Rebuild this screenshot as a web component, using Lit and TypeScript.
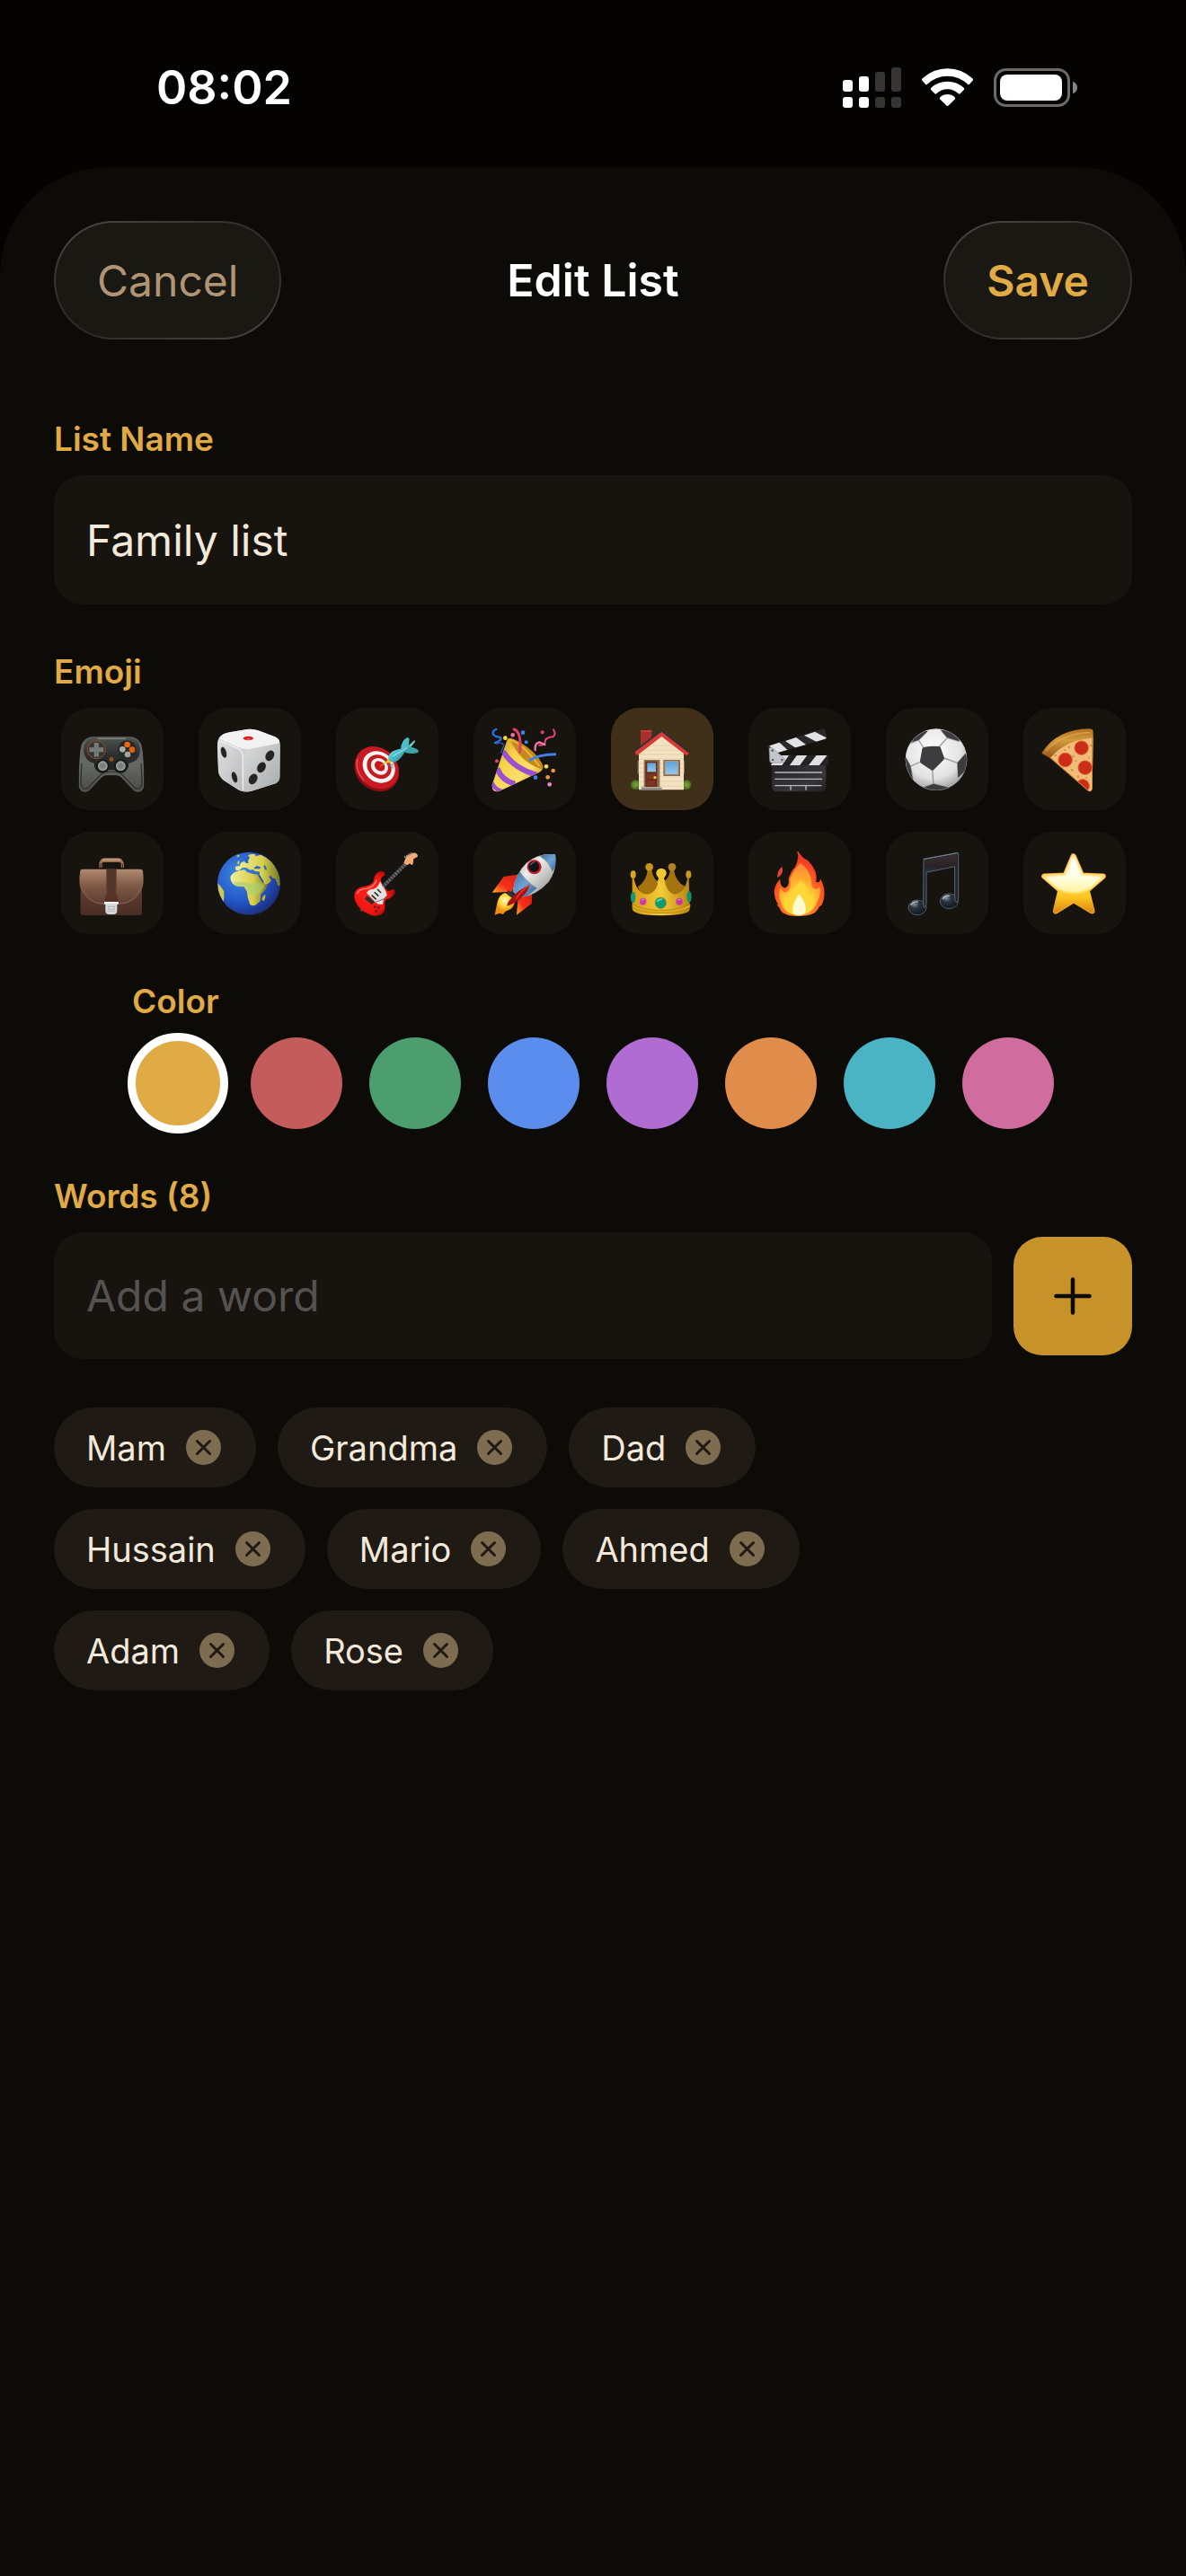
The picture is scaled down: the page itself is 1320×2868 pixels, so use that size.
import { LitElement, html, svg, css } from "lit";
import type { TemplateResult } from "lit";
import { customElement, state } from "lit/decorators.js";

interface EmojiOption {
  name: string;
  box: string;
  art: TemplateResult;
}

const EMOJIS: EmojiOption[] = [
  {
    name: "Game controller",
    box: "54 54 342 342",
    art: svg`
      <defs>
        <linearGradient id="pad-body" x1="0" y1="0" x2="0" y2="1">
          <stop offset="0" stop-color="#5b5f5b"/><stop offset=".5" stop-color="#666863"/><stop offset="1" stop-color="#4a4b47"/>
        </linearGradient>
        <linearGradient id="pad-plate" x1="0" y1="0" x2="0" y2="1">
          <stop offset="0" stop-color="#4d5350"/><stop offset=".5" stop-color="#2b2e2c"/><stop offset="1" stop-color="#1f2120"/>
        </linearGradient>
        <radialGradient id="pad-stick"><stop offset="0" stop-color="#6f7573"/><stop offset=".7" stop-color="#858b89"/><stop offset="1" stop-color="#b4b8b6"/></radialGradient>
      </defs>
      <path d="M160 152h125q26 1 36 26q9 40 8 136q-2 20-19 20q-12-1-20-12l-34-36q-8-8-18-8h-32q-10 0-18 8l-34 36q-8 12-20 12q-18-1-19-20q-1-96 8-136q10-25 37-26z" fill="url(#pad-body)" stroke="#73766f" stroke-width="2"/>
      <path d="M123 240q-4 50-2 76M321 240q4 50 2 76" stroke="#2f312e" stroke-width="4" fill="none"/>
      <path d="M124 314q4 18 20 7l44-45q8-8 20-8h28q12 0 20 8l44 45q16 11 20-7" fill="none" stroke="#32342f" stroke-width="4"/>
      <path d="M166 154h112q38 2 40 42q-2 38-38 43q0 30-27 32q-13 0-21-9h-20q-8 9-21 9q-27-2-27-32q-32-6-35-43q2-40 37-42z" fill="url(#pad-plate)"/>
      <path d="M176 157h94" stroke="#7d8581" stroke-width="5"/>
      <circle cx="172" cy="194" r="30" fill="#343634" stroke="#9a4c20" stroke-width="3"/>
      <path d="M165 171h14v16h16v14h-16v16h-14v-16h-16v-14h16z" fill="#747a76" stroke="#8d938f" stroke-width="1"/>
      <circle cx="275" cy="194" r="31" fill="#272928"/>
      <circle cx="275" cy="177" r="10" fill="#ee6410"/><circle cx="291" cy="194" r="10" fill="#e25e0f"/>
      <circle cx="259" cy="193" r="10" fill="#a9abab"/><circle cx="276" cy="210" r="10" fill="#a3a5a5"/>
      <circle cx="222" cy="226" r="6" fill="#8c4316" stroke="#c66a2a" stroke-width="2"/>
      <circle cx="193" cy="249" r="23" fill="#191b1a"/><circle cx="253" cy="249" r="23" fill="#191b1a"/>
      <circle cx="193" cy="248" r="16" fill="url(#pad-stick)"/><circle cx="253" cy="248" r="16" fill="url(#pad-stick)"/>`,
  },
  {
    name: "Die",
    box: "513 54 342 342",
    art: svg`
      <defs>
        <linearGradient id="die-left" x1="0" y1="0" x2="1" y2="1"><stop offset="0" stop-color="#e0e0e1"/><stop offset="1" stop-color="#b9babc"/></linearGradient>
        <linearGradient id="die-right" x1="0" y1="0" x2="1" y2="1"><stop offset="0" stop-color="#dcdddd"/><stop offset="1" stop-color="#a9aaac"/></linearGradient>
      </defs>
      <path d="M584 151q8-10 26-14l65-11q20-2 37 4l56 21q17 8 17 29l-1 105q0 15-14 22l-80 25q-26 5-42-3l-50-32q-18-14-19-33l-3-84q0-20 8-29z" fill="#cfd0d1"/>
      <path d="M580 160q-5 12-4 30l3 74q1 19 19 33l50 32q8 4 14 3l-2-112q0-20-14-28z" fill="url(#die-left)"/>
      <path d="M783 166q2 8 2 18l-1 101q0 15-14 22l-80 25q-16 4-28 2l-1-114q1-20 14-26z" fill="url(#die-right)"/>
      <path d="M582 155q8-13 28-18l65-11q20-2 37 4l56 21q16 7 15 17q-1 4-8 6l-90 17q-20 3-36-4l-58-25q-8-3-9-7z" fill="#f2f2f3"/>
      <path d="M584 164l62 27q14 8 14 28l1 110" fill="none" stroke="#f1f1f2" stroke-width="4"/>
      <path d="M664 190q60-8 114-22" stroke="#f0f0f0" stroke-width="3" fill="none"/>
      <ellipse cx="679" cy="156" rx="17" ry="6.500" fill="#dc1420"/><ellipse cx="679" cy="158" rx="8" ry="3" fill="#f45a55"/>
      <g fill="#242425" stroke="#111" stroke-width="1">
        <ellipse cx="597" cy="203" rx="8" ry="18" transform="rotate(-16 597 203)"/>
        <ellipse cx="633" cy="286" rx="8" ry="18" transform="rotate(-16 633 286)"/>
        <ellipse cx="751" cy="214" rx="13" ry="18" transform="rotate(28 751 214)"/>
        <ellipse cx="723" cy="253" rx="13" ry="18" transform="rotate(28 723 253)"/>
        <ellipse cx="695" cy="292" rx="13" ry="18" transform="rotate(28 695 292)"/>
      </g>`,
  },
  {
    name: "Target",
    box: "42 54 342 342",
    art: svg`
      <defs>
        <linearGradient id="dart" x1="0" y1="0" x2="1" y2="1"><stop offset="0" stop-color="#7fe0e4"/><stop offset=".5" stop-color="#46b9c4"/><stop offset="1" stop-color="#2b8793"/></linearGradient>
      </defs>
      <ellipse cx="178" cy="260" rx="80" ry="68" transform="rotate(42 178 260)" fill="#8d0f13"/>
      <ellipse cx="179" cy="254" rx="78" ry="65" transform="rotate(42 179 254)" fill="#c81a20"/>
      <path d="M114 224q-12 36 22 74" stroke="#e87173" stroke-width="3" fill="none"/>
      <ellipse cx="185" cy="252" rx="58" ry="49" transform="rotate(42 185 252)" fill="#f6f4f3"/>
      <ellipse cx="186" cy="251" rx="44" ry="37" transform="rotate(42 186 251)" fill="#c71a20"/>
      <ellipse cx="187" cy="250" rx="31" ry="26" transform="rotate(42 187 250)" fill="#f4f1f0"/>
      <ellipse cx="188" cy="249" rx="19" ry="15" transform="rotate(42 188 249)" fill="#c4191f"/>
      <path d="M214 244l18 16q6-14 4-24z" fill="#7d8b90" opacity=".5"/>
      <path d="M190 249l24-17" stroke="#d8a410" stroke-width="3" stroke-linecap="round"/>
      <path d="M206 238l12-16 10 14q-12 4-22 2z" fill="#f0c010"/>
      <path d="M278 186l26-24q4 4 0 8l-18 22z" fill="#66cdd4"/>
      <path d="M216 222q2-16 18-24q18-8 36-8q6 10-8 26q-10 16-28 20q-12 0-18-14z" fill="url(#dart)"/>
      <path d="M258 192q2-28 20-38q6-2 9 4q0 20-9 38z" fill="#4cbcc5"/>
      <path d="M264 200l22-16q22 4 31 12q2 6-3 8q-22 8-50-4z" fill="#3fa3ad"/>
      <path d="M232 216l48-28" stroke="#9deef0" stroke-width="3"/>`,
  },
  {
    name: "Party popper",
    box: "501 54 342 342",
    art: svg`
      <defs>
        <linearGradient id="cone" x1="0" y1="0" x2="1" y2="1"><stop offset="0" stop-color="#c98d16"/><stop offset=".35" stop-color="#f7d24a"/><stop offset=".65" stop-color="#fbe06a"/><stop offset="1" stop-color="#c38713"/></linearGradient>
        <clipPath id="cone-clip"><path d="M563 312l50-150q4-8 10-4q30 76 107 102q-2 6-10 10l-132 62q-18 6-24-8z"/></clipPath>
      </defs>
      <path d="M614 160q6-12 36 6q64 36 83 82q2 14-8 14q-60 0-111-102z" fill="#c48a1a"/>
      <path d="M622 160q40 10 100 90" fill="none" stroke="#f0b83c" stroke-width="5"/>
      <path d="M563 312l50-150q4-8 10-4q30 76 107 102q-2 6-10 10l-132 62q-18 6-24-8z" fill="url(#cone)"/>
      <g clip-path="url(#cone-clip)" fill="none" stroke="#9c4fcf" stroke-width="18">
        <path d="M600 200q36 58 112 78"/><path d="M580 256q16 42 60 52"/><path d="M562 304q8 22 36 30" stroke-width="14"/>
      </g>
      <path d="M577 126q-14 4-10 17q6 8 16 8q14 2 8 10q-8 8-18 10" fill="none" stroke="#2b6fe8" stroke-width="7" stroke-linecap="round"/>
      <path d="M578 174q22-8 24 8l-10 22" fill="none" stroke="#2458c6" stroke-width="4" stroke-linecap="round"/>
      <path d="M636 126q26 8 20 76" fill="none" stroke="#e23c68" stroke-width="9" stroke-linecap="round"/>
      <path d="M687 230q28-20 90-21" fill="none" stroke="#3f7fe8" stroke-width="9"/>
      <path d="M768 127q10 16-2 24q-26 2-26 16q0 14-20 12" fill="none" stroke="#e8447e" stroke-width="6" stroke-linecap="round"/>
      <path d="M707 195q-2-24 14-26l18 8" fill="none" stroke="#f07ca8" stroke-width="7" stroke-linecap="round"/>
      <g><circle cx="607" cy="155" r="7" fill="#f6e23e"/><circle cx="632" cy="145" r="7" fill="#f06fa6"/><circle cx="666" cy="137" r="7" fill="#3b84ee"/><circle cx="677" cy="169" r="6" fill="#3b84ee"/><circle cx="731" cy="136" r="6" fill="#df4070"/><circle cx="579" cy="232" r="6" fill="#e04468"/><circle cx="708" cy="287" r="7" fill="#3b84ee"/><circle cx="744" cy="250" r="7" fill="#f4e04a"/><circle cx="767" cy="264" r="7" fill="#f0983c"/><circle cx="749" cy="286" r="7" fill="#f09a40"/><circle cx="755" cy="310" r="7" fill="#f287bd"/></g>`,
  },
  {
    name: "House",
    box: "60 54 342 342",
    art: svg`
      <defs>
        <linearGradient id="pane" x1="0" y1="0" x2="0" y2="1"><stop offset="0" stop-color="#5e9fd6"/><stop offset="1" stop-color="#93c9ee"/></linearGradient>
        <radialGradient id="bush"><stop offset="0" stop-color="#7fa63c"/><stop offset="1" stop-color="#466b1d"/></radialGradient>
      </defs>
      <circle cx="142" cy="311" r="16" fill="url(#bush)"/><circle cx="312" cy="311" r="16" fill="url(#bush)"/>
      <path d="M159 129h37v38l-37 30z" fill="#a5302c"/><path d="M159 129h37v5h-37z" fill="#c9413a"/>
      <path d="M149 230h5v45h-5zM302 230h4v45h-4z" fill="#8a7159"/>
      <path d="M153 205l76-60 74 60v123H153z" fill="#f3e2c1"/>
      <g stroke="#dcc9a5" stroke-width="2"><path d="M196 180h66M176 195h106M154 210h148M154 225h148M154 240h148M154 255h148M154 270h148M154 285h148M154 300h148M154 315h148"/></g>
      <path d="M139 196l90-68 92 72-7 9-85-66-84 66z" fill="#24303a"/>
      <path d="M139 202l90-68 92 72-9 8-83-64-82 64z" fill="#d93a33"/>
      <path d="M170 228h53v92h-53z" fill="#8d6f57"/><path d="M175 233h39v86h-39z" fill="#6b2c18"/>
      <path d="M181 238h29v30h-29z" fill="url(#pane)"/><path d="M181 276h27v16h-27zM181 298h27v16h-27z" fill="#7b3820"/>
      <circle cx="207" cy="287" r="5" fill="#f4bd3c"/>
      <path d="M235 228h56v54h-56z" fill="#876b55"/><path d="M241 233h43v43h-43z" fill="url(#pane)" stroke="#c9ab86" stroke-width="2"/>
      <path d="M163 318h65l4 11h-73z" fill="#8c8780"/><path d="M163 318h65v4h-65z" fill="#b4aea5"/>`,
  },
  {
    name: "Clapper board",
    box: "519 54 342 342",
    art: svg`
      <defs>
        <linearGradient id="slate" x1="0" y1="0" x2="1" y2="1"><stop offset="0" stop-color="#242426"/><stop offset=".7" stop-color="#37373a"/><stop offset="1" stop-color="#1d1d1f"/></linearGradient>
        <clipPath id="arm-top"><path d="M582 183l184-59q8-2 10 4l4 24q0 5-6 7l-168 48q-10 2-14-6z"/></clipPath>
        <clipPath id="arm-low"><path d="M592 213h190q6 0 6 7v20q0 7-7 7H600q-8 0-8-8z"/></clipPath>
      </defs>
      <path d="M597 240h181v76q0 18-18 18H616q-19 0-19-18z" fill="url(#slate)"/>
      <path d="M607 270h158M607 292h158M607 314h156M660 314v15M711 314v15" stroke="#b9b9bb" stroke-width="4"/>
      <g clip-path="url(#arm-top)"><path d="M575 110h220v120H575z" fill="#29292b"/>
        <path d="M584 176l34-10 34 31-34 14zM642 165l36-12 36 26-36 10zM705 146l36-12 42 22-36 12z" fill="#e3e3e5"/></g>
      <g clip-path="url(#arm-low)"><path d="M580 205h220v50H580z" fill="#232325"/>
        <path d="M592 248l26-38h38l-26 38zM655 248l28-38h34l-28 38zM718 248l30-38h36l-30 38z" fill="#dfdfe1"/></g>
      <path d="M588 190q4-6 10-2l40 34q8 10 0 14l-42 2q-6-1-6-8z" fill="#c2c5c9" stroke="#85888c" stroke-width="2"/>
      <circle cx="599" cy="197" r="4" fill="#606367"/><circle cx="600" cy="228" r="4" fill="#606367"/><circle cx="631" cy="228" r="4" fill="#606367"/>`,
  },
  {
    name: "Soccer ball",
    box: "78 54 342 342",
    art: svg`
      <defs>
        <radialGradient id="ball" cx=".45" cy=".35" r=".65"><stop offset="0" stop-color="#ffffff"/><stop offset=".7" stop-color="#e2e2e3"/><stop offset="1" stop-color="#a4a4a6"/></radialGradient>
        <clipPath id="ball-clip"><circle cx="246" cy="227" r="102"/></clipPath>
      </defs>
      <circle cx="246" cy="227" r="103" fill="url(#ball)"/>
      <g clip-path="url(#ball-clip)">
        <g fill="none" stroke="#9b9b9d" stroke-width="4"><path d="M203 186l-16-24M257 183l26-29M272 222l45 16M233 262l4 48M191 236l-31 13M187 162l-36 14M187 162l30-30M283 154l-22-26M283 154l40 12M317 238l26-30M317 238l2 50M237 308l-34 12M237 308l46 12M160 249l-16-28M160 249l8 44"/></g>
        <g fill="#3d3d3f"><path d="M204 186q26-6 52-3q4 1 5 5l12 34q0 4-3 7l-33 33q-4 3-8 0l-34-23q-4-3-3-8l7-40q1-4 5-5z"/>
        <path d="M261 128l22 26 40 12v-46zM217 132l-30 30-30 8 10-40zM144 218l16 31 8 46-30-20zM345 206l-28 32 2 50 40-40zM200 322l37-14 50 12-20 30h-50z"/></g>
      </g>`,
  },
  {
    name: "Pizza",
    box: "537 54 342 342",
    art: svg`
      <defs>
        <linearGradient id="crust" x1="0" y1="0" x2="0" y2="1"><stop offset="0" stop-color="#b5701d"/><stop offset=".4" stop-color="#d39a3e"/><stop offset="1" stop-color="#9a5916"/></linearGradient>
        <clipPath id="slice"><path d="M622 214q60-54 148-60l-3 168q-2 14-12 9z"/></clipPath>
      </defs>
      <path d="M616 214q60-60 154-64l-3 174q-3 14-14 8z" fill="#c78330"/>
      <g clip-path="url(#slice)">
        <path d="M600 140h180v200H600z" fill="#f0bd78"/>
        <g fill="#dc8a48"><circle cx="690" cy="185" r="4"/><circle cx="704" cy="216" r="4"/><circle cx="712" cy="232" r="3"/><circle cx="700" cy="262" r="4"/><circle cx="755" cy="221" r="3"/><circle cx="720" cy="284" r="4"/><circle cx="748" cy="288" r="3"/><circle cx="644" cy="213" r="4"/><circle cx="764" cy="180" r="4"/><circle cx="676" cy="196" r="3"/></g>
        <g fill="#cb2d18" stroke="#e05a2c" stroke-width="3"><circle cx="731" cy="188" r="23"/><circle cx="677" cy="228" r="23"/><circle cx="743" cy="254" r="23"/><circle cx="735" cy="315" r="22"/></g>
        <path d="M768 150v180" stroke="#c4762a" stroke-width="4"/>
      </g>
      <path d="M599 204q50-78 156-80q15 0 15 10v14q0 8-12 8q-80 8-128 62q-5 3-9 1l-20-11q-4-2-2-4z" fill="url(#crust)"/>
      <path d="M612 198q50-56 146-62" stroke="#e2b25c" stroke-width="4" fill="none" opacity=".7"/>`,
  },
  {
    name: "Briefcase",
    box: "54 468 342 342",
    art: svg`
      <defs>
        <linearGradient id="flap" x1="0" y1="0" x2="0" y2="1"><stop offset="0" stop-color="#b08a70"/><stop offset=".5" stop-color="#7d5744"/><stop offset="1" stop-color="#5d3c30"/></linearGradient>
        <linearGradient id="case" x1="0" y1="0" x2="0" y2="1"><stop offset="0" stop-color="#6b4638"/><stop offset="1" stop-color="#4a2d24"/></linearGradient>
      </defs>
      <path d="M183 588v-14q6-4 6 4v10M262 588v-14q-6-4-6 4v10" fill="none" stroke="#8d6a52" stroke-width="4"/>
      <path d="M181 574q4-18 18-18h46q14 0 18 18h-7q-4-4-12-4h-44q-8 0-12 4z" fill="#9d735a"/>
      <path d="M192 562h60" stroke="#d4a686" stroke-width="4"/>
      <path d="M119 620h205v120q0 7-7 7H126q-7 0-7-7z" fill="url(#case)"/>
      <path d="M118 600q0-7 9-7h190q9 0 10 7q4 32 0 50q-20 58-78 61h-55q-58-3-77-61q-4-20 1-50z" fill="url(#flap)"/>
      <path d="M120 652q22 56 76 57h51q56-2 76-57" fill="none" stroke="#8c6654" stroke-width="3"/>
      <path d="M205 593h34v90h-34z" fill="#54352a"/><path d="M207 594v88M237 594v88" stroke="#7d5745" stroke-width="1"/>
      <path d="M200 704v-9q0-19 22-20q22 1 22 20v9z" fill="#573327"/>
      <path d="M198 702h47v9h-4v20q0 13-12 13h-15q-12 0-12-13v-20h-4z" fill="#d9dadc"/>
      <path d="M198 702h47v6h-47z" fill="#f4f4f5"/><path d="M212 718h20v10h-20zM206 734h30" fill="none" stroke="#a4a5a8" stroke-width="2"/>`,
  },
  {
    name: "Globe",
    box: "513 468 342 342",
    art: svg`
      <defs>
        <radialGradient id="sea" cx=".35" cy=".35" r=".72"><stop offset="0" stop-color="#3f8be2"/><stop offset=".6" stop-color="#2457c8"/><stop offset="1" stop-color="#1c2c78"/></radialGradient>
        <linearGradient id="land" x1="0" y1="0" x2="1" y2="0"><stop offset="0" stop-color="#f0ee9a"/><stop offset=".6" stop-color="#d8cf4c"/><stop offset="1" stop-color="#6f7420"/></linearGradient>
        <clipPath id="globe-clip"><circle cx="681" cy="641" r="104"/></clipPath>
      </defs>
      <circle cx="681" cy="641" r="105" fill="url(#sea)"/>
      <g clip-path="url(#globe-clip)">
        <path d="M619 618q10-16 30-20l18-3 8 8 20 6 18 2 12 21 8 10 12-2-8 20-16 18-2 22-14 12q-8 6-20 0l-8-26-2-18-10-16-24-2q-22-8-22-32z" fill="url(#land)"/>
        <path d="M630 636q30-2 50 6l40-4 14 10-14 22-14 10-22-2-10-22-10-6-24 0z" fill="#a8cf70" opacity=".65"/>
        <path d="M637 596l-1-12 14-2 4-10 12-6 6-14 12-8 16-2 4 8 20-6q34 14 50 46q14 28 12 58l-8 0-8-22-12-4-2-8-8 4 8 12-8 10-14 4-18-34 2-8-16-2-8-6-8 2-14-8-12 0-12 10z" fill="url(#land)"/>
        <path d="M666 566q0-14 12-18l6 6-6 10 2 10-10-2zM698 588l10-6 12 4-2 6-18 0zM730 582q6-6 8 4l4 10-8-2z" fill="#2a63cc"/>
        <path d="M713 612l16 24" stroke="#2450b8" stroke-width="5"/>
        <path d="M640 574l6-10 4 2-2 12zM640 548l8-4 2 6-8 4z" fill="#b9c850"/>
        <path d="M576 640q18 16 22 30 2 22-4 40-16-20-18-70z" fill="#cfc850"/>
        <path d="M724 694q4-14 12-16 2 12-6 22z" fill="#c4b838"/>
      </g>`,
  },
  {
    name: "Guitar",
    box: "42 468 342 342",
    art: svg`
      <defs>
        <radialGradient id="guitar" cx=".4" cy=".5" r=".6"><stop offset="0" stop-color="#ff2a1e"/><stop offset=".7" stop-color="#f01310"/><stop offset="1" stop-color="#a50b0b"/></radialGradient>
      </defs>
      <circle cx="127" cy="730" r="4" fill="#555"/>
      <path d="M103 682q0-28 36-32 28-4 30-24 4-26 26-26 14 4 9 14-20 8-8 28l18 24q10 0 16-6 12 2 8 14-12 18-28 20-8 8-5 24 2 28-32 31-28-2-52-26-18-20-18-41z" fill="url(#guitar)"/>
      <path d="M112 676q6-18 34-18 26-8 32-30" fill="none" stroke="#ff8a80" stroke-width="4"/>
      <path d="M189 634l20 34 3 12q-12 8-14 30-12 4-24-6l-30-32q10-14 22-12 18-6 23-26z" fill="#e4e2df"/>
      <path d="M199 651l75-75" stroke="#3a3c3e" stroke-width="13"/>
      <path d="M199 651l75-75" stroke="#9fa3a6" stroke-width="11" stroke-dasharray="2 8"/>
      <path d="M268 573l8-22q18-14 32-12 8 4 7 12l-14 8-2 17q-6 6-10-2l-10 6z" fill="#f0ab78"/>
      <path d="M270 553l28-15" stroke="#8f8f92" stroke-width="6" stroke-dasharray="5 3"/>
      <path d="M180 660l12 12M170 670l14 13M161 680l15 14" stroke="#2c2c2e" stroke-width="5"/>
      <path d="M146 682l24 20-8 10-24-20z" fill="#2e2d2e"/><path d="M170 704l28-10 16-10" fill="none" stroke="#666" stroke-width="3"/>
      <circle cx="172" cy="719" r="4" fill="#54191a"/><circle cx="184" cy="722" r="4" fill="#54191a"/><circle cx="176" cy="733" r="4" fill="#54191a"/>`,
  },
  {
    name: "Rocket",
    box: "501 468 342 342",
    art: svg`
      <defs>
        <linearGradient id="hull" x1="0" y1="0" x2="1" y2="1"><stop offset="0" stop-color="#777b7e"/><stop offset=".4" stop-color="#eef0ef"/><stop offset=".65" stop-color="#b8bab8"/><stop offset="1" stop-color="#4e5254"/></linearGradient>
        <linearGradient id="blue" x1="0" y1="0" x2="1" y2="1"><stop offset="0" stop-color="#2a5d93"/><stop offset=".5" stop-color="#6ea4d2"/><stop offset="1" stop-color="#1f4a7c"/></linearGradient>
        <linearGradient id="fin" x1="1" y1="0" x2="0" y2="1"><stop offset="0" stop-color="#d91d12"/><stop offset=".6" stop-color="#f4301a"/><stop offset="1" stop-color="#ffb020"/></linearGradient>
        <radialGradient id="jet" cx=".5" cy=".35"><stop offset="0" stop-color="#fffbd0"/><stop offset=".5" stop-color="#ffd83a"/><stop offset="1" stop-color="#f08a10"/></radialGradient>
        <clipPath id="hull-clip"><path d="M632 668q8-60 46-96 40-34 96-28 8 48-22 92-42 46-96 52z"/></clipPath>
      </defs>
      <path d="M656 610l-54 8-39 53 66-3z" fill="url(#fin)"/>
      <path d="M690 668l7 10-2 30-50 38 4-50z" fill="url(#fin)"/>
      <path d="M606 672q-20 6-26 34l-8 40 16-6 12 4 8-10 18-8q16-14 14-36z" fill="url(#jet)"/>
      <path d="M616 662l26 20-8 10-20-14z" fill="#2f3436"/>
      <g clip-path="url(#hull-clip)">
        <path d="M620 530h170v170H620z" fill="url(#hull)"/>
        <path d="M655 600q22 34 58 56l-60 50-40-30z" fill="url(#blue)"/>
        <path d="M722 550q30 18 42 52l36-60-40-20z" fill="url(#blue)"/>
        <path d="M655 600q22 34 58 56M722 550q30 18 42 52" fill="none" stroke="#c9b468" stroke-width="2"/>
      </g>
      <path d="M688 646q-40 18-56 40-18 14-19 30 26-6 48-28 22-18 27-42z" fill="#a81214"/>
      <path d="M688 646q-34 24-44 46" stroke="#ef3a2c" stroke-width="4" fill="none"/>
      <circle cx="704" cy="586" r="24" fill="#c81a20"/><circle cx="703" cy="585" r="18" fill="#101518"/><path d="M692 580q4-10 14-11" stroke="#53636a" stroke-width="4" fill="none"/>`,
  },
  {
    name: "Crown",
    box: "60 468 342 342",
    art: svg`
      <defs>
        <linearGradient id="gold" x1="0" y1="0" x2="1" y2="0"><stop offset="0" stop-color="#d39a14"/><stop offset=".5" stop-color="#f5cc38"/><stop offset="1" stop-color="#b98412"/></linearGradient>
      </defs>
      <path d="M150 652q30-22 32-56h14q4 30 24 40l14 0q20-12 24-40h12q6 38 38 56l-20 40H165z" fill="#a5740f"/>
      <circle cx="188" cy="586" r="13" fill="#c9971a"/><circle cx="264" cy="586" r="13" fill="#b08423"/>
      <ellipse cx="134" cy="611" rx="9" ry="13" fill="#dba81c"/><ellipse cx="319" cy="611" rx="9" ry="13" fill="#c9981c"/>
      <path d="M131 620h5q10 56 46 57 34-6 38-57l8-14 8 14q8 50 36 57 36-2 44-57h4l3 108q-2 12-40 17-56 6-114 0-36-6-38-18z" fill="url(#gold)"/>
      <circle cx="228" cy="607" r="17" fill="#f4c72e"/><path d="M220 620h16l6 20h-28z" fill="#f0c230"/>
      <path d="M132 710q30 20 96 20t96-20v10q-30 20-96 20t-96-20z" fill="#dfac20" stroke="#a87912" stroke-width="2"/>
      <ellipse cx="134" cy="687" rx="8" ry="19" fill="#159a74"/><ellipse cx="321" cy="685" rx="8" ry="19" fill="#13906c"/>
      <circle cx="226" cy="706" r="19" fill="#0f9c74" stroke="#c08c12" stroke-width="2"/><path d="M214 702q6-10 18-8" stroke="#7ce0be" stroke-width="4" fill="none"/>
      <ellipse cx="167" cy="701" rx="11" ry="12" fill="#cf3ca8"/><ellipse cx="288" cy="701" rx="11" ry="12" fill="#c2389e"/>
      <path d="M162 697q4-5 9-3M283 697q4-5 9-3" stroke="#f6a0dc" stroke-width="3" fill="none"/>`,
  },
  {
    name: "Fire",
    box: "519 468 342 342",
    art: svg`
      <defs>
        <radialGradient id="blaze" cx=".5" cy=".8" r=".8"><stop offset="0" stop-color="#ffb02a"/><stop offset=".45" stop-color="#ff6a26"/><stop offset="1" stop-color="#ee2a1c"/></radialGradient>
        <radialGradient id="core" cx=".5" cy=".85" r=".8"><stop offset="0" stop-color="#fffbd8"/><stop offset=".3" stop-color="#ffe23e"/><stop offset=".7" stop-color="#ffa92c"/><stop offset="1" stop-color="#ff8a3c"/></radialGradient>
      </defs>
      <path d="M631 584q6 20-6 30-4 6-10 6 0-22 16-36z" fill="#e9452e"/>
      <path d="M683 535q12 22 34 32 32 32 26 68 16 6 16-10 18 30 12 66-2 12-8 22l-8 6q-10 24-40 29-30 4-60 0-28-8-32-26l-10-10 6 0q-14-20-14-46 4-26 20-40-2 26 16 30 16-8 12-30 8-26 22-40 14-28 8-51z" fill="url(#blaze)"/>
      <path d="M683 535q12 22 34 32 32 32 26 68" fill="none" stroke="#f0432c" stroke-width="5"/>
      <path d="M692 572q36 24 38 68-2 16 14 20 14-2 12-14 8 30-8 58-14 38-60 43-48-2-60-40-12-28-2-52 8 20 22 14 16-12 10-40 4-22 34-57z" fill="url(#core)"/>
      <path d="M692 630q30 24 24 56 14 0 18-10 4 36-18 58-30 20-60 0-22-20-18-50 10 14 18 6 8-20 36-60z" fill="#ffd838"/>
      <path d="M688 676q26 34 22 56-2 14-22 16-22-2-22-18 2-24 22-54z" fill="#fffbd0"/>`,
  },
  {
    name: "Music notes",
    box: "78 468 342 342",
    art: svg`
      <defs>
        <radialGradient id="head" cx=".35" cy=".3" r=".7"><stop offset="0" stop-color="#8796a4"/><stop offset=".35" stop-color="#2b3640"/><stop offset="1" stop-color="#12171c"/></radialGradient>
        <linearGradient id="beam" x1="0" y1="0" x2="0" y2="1"><stop offset="0" stop-color="#3a2f31"/><stop offset=".7" stop-color="#292124"/><stop offset="1" stop-color="#27384a"/></linearGradient>
      </defs>
      <ellipse cx="183" cy="721" rx="30" ry="25" fill="url(#head)" stroke="#4e5f6e" stroke-width="3"/>
      <ellipse cx="289" cy="700" rx="30" ry="25" fill="url(#head)" stroke="#4e5f6e" stroke-width="3"/>
      <path d="M204 559l114-21q2 0 2 3v150q0 10-6 14l-6-8V584l-95 20v106q-1 8-6 12l-4-8z" fill="#20262c" stroke="#586775" stroke-width="3" stroke-linejoin="round"/>
      <path d="M208 564l106-20v36l-106 22z" fill="url(#beam)"/>
      <path d="M205 560l112-21" stroke="#77838d" stroke-width="3"/>
      <path d="M162 712q8-12 22-10M268 692q8-12 22-10" stroke="#dfe8ee" stroke-width="4" fill="none" stroke-linecap="round" opacity=".75"/>`,
  },
  {
    name: "Star",
    box: "537 468 342 342",
    art: svg`
      <defs>
        <linearGradient id="star" x1="0" y1="0" x2="0" y2="1"><stop offset="0" stop-color="#ffd98a"/><stop offset=".45" stop-color="#ffd75a"/><stop offset=".75" stop-color="#fbc51f"/><stop offset="1" stop-color="#e08c12"/></linearGradient>
        <linearGradient id="shine" x1="0" y1="0" x2="0" y2="1"><stop offset="0" stop-color="#ffffff"/><stop offset=".6" stop-color="#fffde0"/><stop offset="1" stop-color="#fff3a0"/></linearGradient>
        <filter id="soft"><feGaussianBlur stdDeviation="3"/></filter>
      </defs>
      <path d="M704 550l28 64 71 3-54 46 17 70-61-37-60 37 16-70-54-46 70-3z" fill="url(#star)" stroke="#f3a93a" stroke-width="19" stroke-linejoin="round"/>
      <path d="M704 550l28 64 71 3-54 46 17 70-61-37-60 37 16-70-54-46 70-3z" fill="url(#star)" stroke="url(#star)" stroke-width="14" stroke-linejoin="round"/>
      <path d="M704 556l26 60 64 6-38 34q-50 26-102 0l-38-34 64-6z" fill="url(#shine)" stroke="url(#shine)" stroke-width="8" stroke-linejoin="round" filter="url(#soft)"/>`,
  },
];

const COLORS = [
  { name: "Gold", value: "#e0aa45" },
  { name: "Red", value: "#c45c5b" },
  { name: "Green", value: "#4c9e6e" },
  { name: "Blue", value: "#5b8def" },
  { name: "Purple", value: "#b06cd3" },
  { name: "Orange", value: "#e08c4a" },
  { name: "Teal", value: "#4bb4c4" },
  { name: "Pink", value: "#d06c9e" },
];

@customElement("app-root")
export class AppRoot extends LitElement {
  @state() private listName = "Family list";
  @state() private emoji = "House";
  @state() private color = "Gold";
  @state() private draft = "";
  @state() private words = ["Mam", "Grandma", "Dad", "Hussain", "Mario", "Ahmed", "Adam", "Rose"];

  static styles = css`
    :host {
      display: flex;
      flex-direction: column;
      min-height: 100vh;
      background: #040301;
      color: #f2e9da;
      font-family: Inter, "Liberation Sans", sans-serif;
      font-size: 48px;
    }
    * {
      box-sizing: border-box;
    }
    button,
    input {
      margin: 0;
      border: 0;
      font: inherit;
      color: inherit;
    }
    button {
      padding: 0;
      cursor: pointer;
    }
    svg {
      display: block;
    }
    .status {
      display: flex;
      align-items: center;
      justify-content: space-between;
      height: 186px;
      padding: 8px 120px 0 174px;
      color: #fff;
    }
    .time {
      font-size: 52px;
      font-weight: 600;
    }
    .indicators {
      display: flex;
      gap: 22px;
    }
    .sheet {
      flex: 1;
      padding: 60px;
      background: #0c0b07;
      border-radius: 120px 120px 0 0;
    }
    .bar {
      display: grid;
      grid-template-columns: 1fr auto 1fr;
      align-items: center;
      margin-bottom: 87px;
    }
    .title {
      margin: 0;
      color: #fff;
      font-size: 50px;
      font-weight: 600;
    }
    .pill {
      justify-self: start;
      height: 132px;
      padding: 0 46px;
      border: 2px solid transparent;
      border-radius: 66px;
      background:
        linear-gradient(#191813, #191813) padding-box,
        linear-gradient(160deg, #4a4945, #32312d 35%, #2b2a26 60%, #484743) border-box;
      color: #b09474;
    }
    .save {
      justify-self: end;
      color: #e0aa45;
      font-weight: 600;
    }
    .group {
      margin: 0 0 51px;
      padding: 0;
      border: 0;
      min-width: 0;
    }
    .caption {
      display: block;
      padding: 0;
      margin-bottom: 16px;
      color: #e0aa45;
      font-size: 37px;
      line-height: 48px;
      font-weight: 600;
    }
    .field {
      display: block;
      width: 100%;
      height: 144px;
      padding: 0 36px;
      border-radius: 32px;
      background: #17140f;
      outline: none;
    }
    .field::placeholder {
      color: #555350;
      opacity: 1;
    }
    .emojis {
      display: grid;
      grid-template-columns: repeat(8, 1fr);
      gap: 24px;
    }
    .tile {
      display: grid;
      justify-self: center;
      width: 114px;
      height: 114px;
    }
    .tile > * {
      grid-area: 1 / 1;
      width: 114px;
      height: 114px;
    }
    .tile svg {
      pointer-events: none;
    }
    .choice {
      appearance: none;
      border-radius: 32px;
      background: #17140f;
    }
    .choice:checked {
      background: #403019;
    }
    .palette {
      width: fit-content;
      margin-inline: auto;
    }
    .swatches {
      display: flex;
      gap: 30px;
    }
    .swatch {
      appearance: none;
      width: 102px;
      height: 102px;
      border-radius: 50%;
      background: var(--swatch);
    }
    .swatch:checked {
      outline: 9px solid #fff;
      outline-offset: -4px;
    }
    .entry {
      display: flex;
      align-items: center;
      gap: 24px;
    }
    .entry .field {
      flex: 1;
      min-width: 0;
      height: 141px;
    }
    .add {
      display: grid;
      place-items: center;
      width: 132px;
      height: 132px;
      border-radius: 32px;
      background: #c69229;
    }
    .chips {
      display: flex;
      flex-wrap: wrap;
      gap: 24px;
      max-width: 85%;
      margin: 54px 0 0;
      padding: 0;
      list-style: none;
    }
    .chip {
      display: flex;
      align-items: center;
      gap: 22px;
      height: 89px;
      padding: 0 39px 0 36px;
      border-radius: 45px;
      background: #1f1a14;
      font-size: 38px;
    }
    .remove {
      width: 39px;
      height: 39px;
      border-radius: 50%;
      background: #7d6c50;
    }
  `;

  private addWord() {
    const word = this.draft.trim();
    if (!word) return;
    this.words = [...this.words, word];
    this.draft = "";
  }

  private removeWord(index: number) {
    this.words = this.words.filter((_, i) => i !== index);
  }

  private renderStatus() {
    return html`
      <div class="status">
        <span class="time">08:02</span>
        <div class="indicators">
          <svg width="65" height="47" viewBox="111 69 195 141" aria-hidden="true">
            <g fill="#fff">
              <rect x="111" y="114" width="33" height="39" rx="9" />
              <rect x="165" y="102" width="33" height="51" rx="9" />
              <rect x="111" y="171" width="33" height="36" rx="9" />
              <rect x="165" y="171" width="33" height="36" rx="9" />
            </g>
            <g fill="#363533">
              <rect x="219" y="87" width="33" height="66" rx="9" />
              <rect x="273" y="72" width="33" height="81" rx="9" />
              <rect x="219" y="171" width="33" height="36" rx="9" />
              <rect x="273" y="171" width="33" height="36" rx="9" />
            </g>
          </svg>
          <svg width="59" height="47" viewBox="372 69 177 141" aria-hidden="true" fill="#fff">
            <path d="M375 115Q374 112 377 109Q413 76 460.500 76Q508 76 544 109Q547 112 546 115L534 128Q531 131 528 128Q499 101 460.500 101Q422 101 393 128Q390 131 387 128Z" />
            <path d="M405 146Q403 143 406 140Q429 119 460.500 119Q492 119 515 140Q518 143 516 146L503 160Q500 162 497 160Q481 145 460.500 145Q440 145 424 160Q421 162 418 160Z" />
            <path d="M435 178Q433 175 436 172Q446 162 460.500 162Q475 162 485 172Q488 175 486 178L463 200Q460.500 202 458 200Z" />
          </svg>
          <svg width="94" height="47" viewBox="615 69 282 141" aria-hidden="true">
            <rect x="619.500" y="79.500" width="246" height="120" rx="36" fill="none" stroke="#6b6a69" stroke-width="9" />
            <rect x="636" y="96" width="207" height="87" rx="24" fill="#fff" />
            <path d="M879 119Q894 125 894 139.500Q894 154 879 160Z" fill="#868584" />
          </svg>
        </div>
      </div>
    `;
  }

  render() {
    return html`
      ${this.renderStatus()}
      <main class="sheet">
        <header class="bar">
          <button class="pill" type="button">Cancel</button>
          <h1 class="title">Edit List</h1>
          <button class="pill save" type="button">Save</button>
        </header>

        <div class="group">
          <label class="caption" for="list-name">List Name</label>
          <input
            id="list-name"
            class="field"
            type="text"
            .value=${this.listName}
            @input=${(e: Event) => (this.listName = (e.target as HTMLInputElement).value)}
          />
        </div>

        <fieldset class="group">
          <legend class="caption">Emoji</legend>
          <div class="emojis">
            ${EMOJIS.map(
              (option) => html`
                <label class="tile">
                  <input
                    class="choice"
                    type="radio"
                    name="emoji"
                    aria-label=${option.name}
                    .checked=${this.emoji === option.name}
                    @change=${() => (this.emoji = option.name)}
                  />
                  <svg viewBox=${option.box} aria-hidden="true">${option.art}</svg>
                </label>
              `
            )}
          </div>
        </fieldset>

        <fieldset class="group palette">
          <legend class="caption">Color</legend>
          <div class="swatches">
            ${COLORS.map(
              (option) => html`
                <input
                  class="swatch"
                  type="radio"
                  name="color"
                  style="--swatch: ${option.value}"
                  aria-label=${option.name}
                  .checked=${this.color === option.name}
                  @change=${() => (this.color = option.name)}
                />
              `
            )}
          </div>
        </fieldset>

        <div class="group">
          <label class="caption" for="new-word">Words (${this.words.length})</label>
          <div class="entry">
            <input
              id="new-word"
              class="field"
              type="text"
              placeholder="Add a word"
              .value=${this.draft}
              @input=${(e: Event) => (this.draft = (e.target as HTMLInputElement).value)}
            />
            <button class="add" type="button" aria-label="Add word" @click=${this.addWord}>
              <svg width="42" height="42" viewBox="0 0 42 42" aria-hidden="true">
                <path d="M21 2.500V39.500M2.500 21H39.500" stroke="#0c0b07" stroke-width="4.500" stroke-linecap="round" />
              </svg>
            </button>
          </div>
          <ul class="chips">
            ${this.words.map(
              (word, index) => html`
                <li class="chip">
                  ${word}
                  <button class="remove" type="button" aria-label="Remove ${word}" @click=${() => this.removeWord(index)}>
                    <svg width="39" height="39" viewBox="0 0 39 39" aria-hidden="true">
                      <path d="M12.500 12.500L26.500 26.500M26.500 12.500L12.500 26.500" stroke="#1f1a14" stroke-width="3" stroke-linecap="round" />
                    </svg>
                  </button>
                </li>
              `
            )}
          </ul>
        </div>
      </main>
    `;
  }
}
